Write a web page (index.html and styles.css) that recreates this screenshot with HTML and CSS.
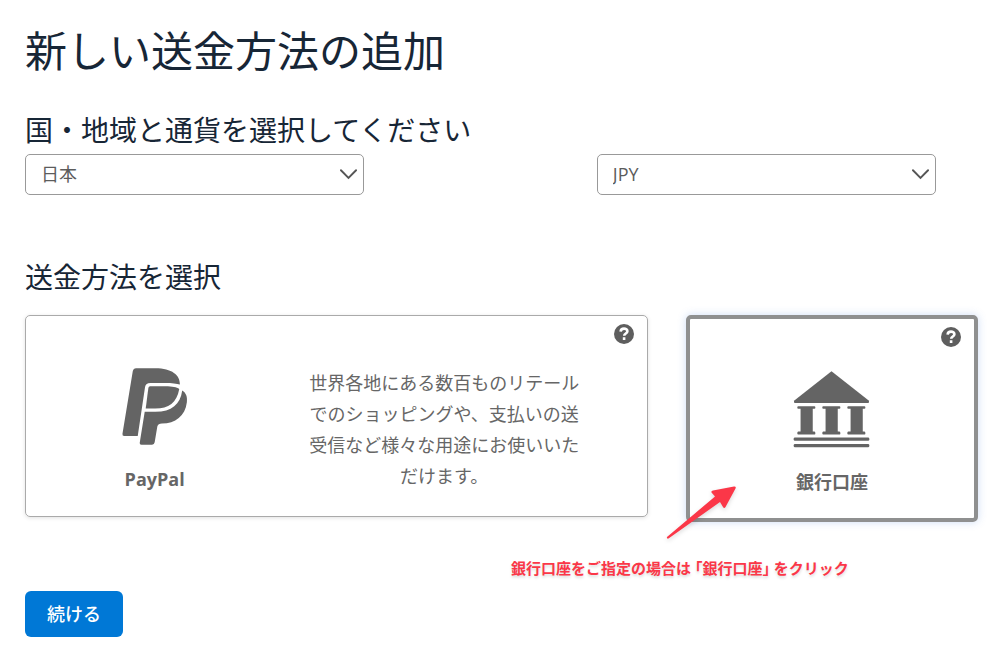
FILE: index.html
```html
<!DOCTYPE html>
<html lang="ja">
<head>
    <meta charset="UTF-8">
    <meta name="viewport" content="width=device-width, initial-scale=1.0">
    <title>新しい送金方法の追加</title>
    <link rel="stylesheet" href="styles.css">
</head>
<body>
    <form class="page">
        <h1>新しい送金方法の追加</h1>

        <h2>国・地域と通貨を選択してください</h2>
        <div class="select-row">
            <div class="select-box">
                <select id="country" aria-label="国・地域">
                    <option selected>日本</option>
                </select>
                <svg class="chevron" viewBox="0 0 18 11"><path d="M1 1l8 8 8-8"/></svg>
            </div>
            <div class="select-box">
                <select id="currency" aria-label="通貨">
                    <option selected>JPY</option>
                </select>
                <svg class="chevron" viewBox="0 0 18 11"><path d="M1 1l8 8 8-8"/></svg>
            </div>
        </div>

        <h2 class="method-title">送金方法を選択</h2>
        <div class="cards">
            <div class="card">
                <input type="radio" id="paypal" name="method">
                <label for="paypal" class="card-body card-wide">
                    <span class="method">
                        <svg class="icon-paypal" viewBox="0 0 198 232">
                            <path d="M42 1H100C150 1 175 22 174 50C165 47 150 45 130 45H85Q71 45 69 57L47 205H6Q0 205 1 198L32 10Q34 1 42 1Z"/>
                            <path d="M84 55H130C152 55 164 58 172 63C165 104 140 122 100 122H71L79 60Q80 55 84 55Z"/>
                            <path d="M181 68C193 75 197 88 195 103C190 145 160 167 120 167Q108 167 106 176L98 224Q97 231 90 231H58Q52 231 53 225L68 132H100C150 132 175 110 181 68Z"/>
                        </svg>
                        <span class="method-name">PayPal</span>
                    </span>
                    <span class="description">世界各地にある数百ものリテールでのショッピングや、支払いの送受信など様々な用途にお使いいただけます。</span>
                </label>
                <button type="button" class="help" aria-label="PayPalについて">
                    <svg viewBox="0 0 20 20"><circle cx="10" cy="10" r="10"/><path d="M6.600 7.600C6.800 5.500 8.200 4.600 10 4.600c2 0 3.400 1 3.400 2.700 0 2.200-3.200 2.200-3.200 4.400M10.100 13.300v2.600"/></svg>
                </button>
            </div>

            <div class="card selected">
                <input type="radio" id="bank" name="method" checked>
                <label for="bank" class="card-body">
                    <span class="method">
                        <svg class="icon-bank" viewBox="0 0 232 234">
                            <path d="M116 1L229 90Q232 97 227 97H5Q0 97 3 90Z"/>
                            <path d="M15 107H64Q67 107 67 111T64 115H59V184H64Q67 184 67 189T64 193H15Q12 193 12 189T15 184H22V115H15Q12 115 12 111T15 107Z"/>
                            <path d="M91 107H140Q143 107 143 111T140 115H135V184H140Q143 184 143 189T140 193H91Q88 193 88 189T91 184H98V115H91Q88 115 88 111T91 107Z"/>
                            <path d="M167 107H216Q219 107 219 111T216 115H211V184H216Q219 184 219 189T216 193H167Q164 193 164 189T167 184H174V115H167Q164 115 164 111T167 107Z"/>
                            <rect x="1" y="202" width="230" height="10" rx="4"/>
                            <rect x="1" y="222" width="230" height="10" rx="4"/>
                        </svg>
                        <span class="method-name">銀行口座</span>
                    </span>
                </label>
                <button type="button" class="help" aria-label="銀行口座について">
                    <svg viewBox="0 0 20 20"><circle cx="10" cy="10" r="10"/><path d="M6.600 7.600C6.800 5.500 8.200 4.600 10 4.600c2 0 3.400 1 3.400 2.700 0 2.200-3.200 2.200-3.200 4.400M10.100 13.300v2.600"/></svg>
                </button>
                <svg class="arrow" viewBox="0 0 70 54"><path d="M1 51L49 10.500L45.500 6.500Q45 4.700 47 4.500L68 0.500Q70.500 0.300 69.500 2.500L59.500 21Q58.200 22.800 57 21L54 16L2.500 52.500Q0.500 53 1 51Z"/></svg>
            </div>
        </div>

        <p class="note">銀行口座をご指定の場合は 「銀行口座」 をクリック</p>

        <button type="submit" class="submit-button">続ける</button>
    </form>
</body>
</html>
```
FILE: styles.css
```css
* {
    box-sizing: border-box;
}

body {
    margin: 0;
    background-color: #fff;
    color: #666;
    font-family: "Open Sans", "Noto Sans CJK JP", sans-serif;
    font-size: 18px;
}

.page {
    padding: 23px 22px 31px 25px;
}

h1,
h2 {
    margin: 0;
    color: #172636;
    font-weight: 400;
}

h1 {
    font-size: 42px;
    line-height: 56px;
}

h2 {
    margin: 33px 0 6px;
    font-size: 28px;
    line-height: 36px;
}

.select-row {
    display: grid;
    grid-template-columns: 3fr 2fr;
}

.select-box {
    position: relative;
    max-width: 339px;
}

.select-box select {
    display: block;
    width: 100%;
    height: 41px;
    padding: 0 40px 1px 15px;
    border: 1px solid #999;
    border-radius: 5px;
    background-color: #fff;
    color: #5c5c5c;
    font: inherit;
    appearance: none;
}

.chevron {
    position: absolute;
    top: 15px;
    right: 7px;
    width: 17px;
    height: 11px;
    fill: none;
    stroke: #555;
    stroke-width: 2;
    stroke-linecap: round;
    pointer-events: none;
}

.method-title {
    margin: 64px 0 20px;
}

.cards {
    display: grid;
    grid-template-columns: 32fr 15fr;
    gap: 38px;
    align-items: start;
}

.card {
    position: relative;
    border: 1px solid #aaa;
    border-radius: 5px;
    box-shadow: 0 1px 4px rgba(0, 0, 0, 0.12);
}

.card.selected {
    border: 4px solid #8f9090;
    box-shadow: 0 0 8px rgba(60, 120, 220, 0.25);
}

.card input {
    position: absolute;
    opacity: 0;
}

.card-body {
    display: block;
    padding: 52px 0 24px;
    cursor: pointer;
}

.card-wide {
    display: grid;
    grid-template-columns: 4fr 5fr;
    padding-right: 42px;
}

.method {
    display: flex;
    flex-direction: column;
    align-items: center;
    gap: 22px;
}

.method svg {
    height: 77px;
    fill: #646464;
}

.icon-paypal {
    width: 66px;
}

.icon-bank {
    width: 77px;
}

.method-name {
    line-height: 24px;
    font-weight: 700;
}

.description {
    justify-self: center;
    max-width: 276px;
    line-height: 31px;
    text-align: center;
}

.help {
    position: absolute;
    top: 8px;
    right: 13px;
    width: 20px;
    height: 20px;
    padding: 0;
    border: none;
    background: none;
    cursor: pointer;
}

.help svg {
    display: block;
    fill: #5e5e5e;
}

.help path {
    fill: none;
    stroke: #fff;
    stroke-width: 2.6;
}

.arrow {
    position: absolute;
    left: -24px;
    bottom: -22px;
    width: 70px;
    height: 54px;
    fill: #fb3748;
    filter: drop-shadow(0 2px 2px rgba(0, 0, 0, 0.15));
    pointer-events: none;
}

.note {
    margin: 34px 0 11px 51%;
    color: #fb3748;
    font-size: 15px;
    font-weight: 700;
    line-height: 24px;
    font-feature-settings: "halt";
    text-shadow: 0 2px 3px rgba(0, 0, 0, 0.15);
}

.submit-button {
    display: block;
    height: 46px;
    padding: 0 22px 3px;
    border: none;
    border-radius: 6px;
    background-color: #0078d6;
    color: #fff;
    font: inherit;
    font-weight: 500;
    cursor: pointer;
}
```
